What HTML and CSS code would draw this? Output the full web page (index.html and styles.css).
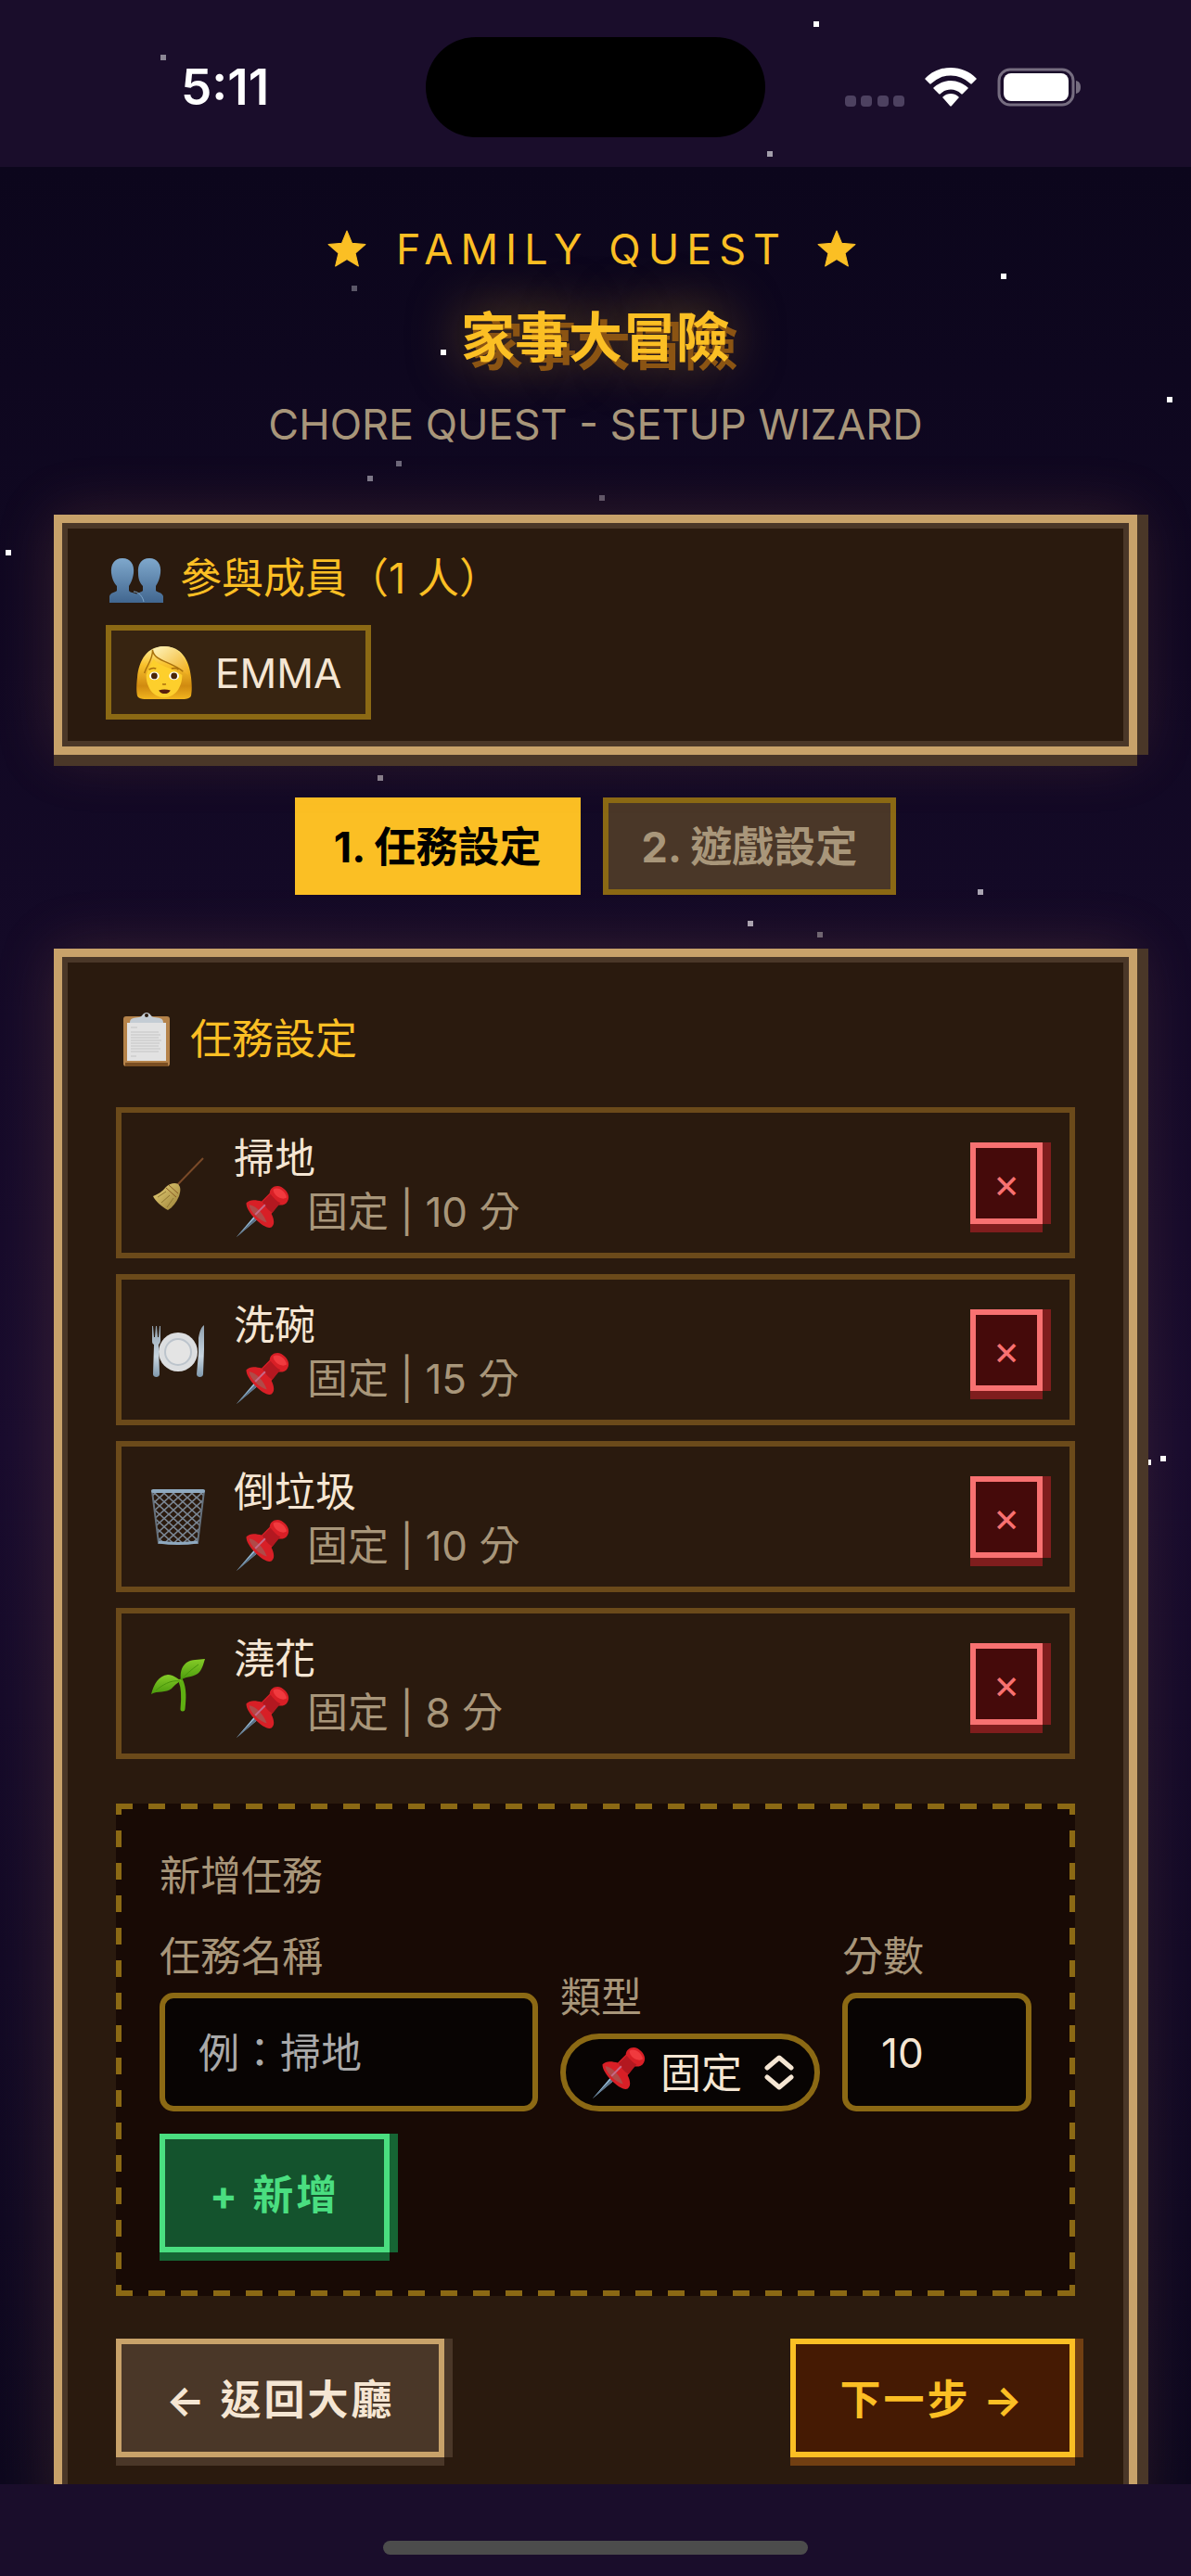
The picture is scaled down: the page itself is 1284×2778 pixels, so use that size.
FILE: index.html
```html
<!DOCTYPE html>
<html lang="zh-Hant">
<head>
    <meta charset="UTF-8">
    <meta name="viewport" content="width=device-width, initial-scale=1.0">
    <title>家事大冒險</title>
    <link rel="stylesheet" href="styles.css">
</head>
<body>
    <!-- 共用圖示 -->
    <svg class="defs" aria-hidden="true">
        <defs>
            <linearGradient id="people" x1="0" y1="0" x2="0" y2="1">
                <stop offset="0" stop-color="#7fa8cc"/>
                <stop offset="1" stop-color="#41668f"/>
            </linearGradient>
            <linearGradient id="hair" x1="0" y1="0" x2="0" y2="1">
                <stop offset="0" stop-color="#fff0a0"/>
                <stop offset="0.35" stop-color="#f9c22c"/>
                <stop offset="0.75" stop-color="#d08a10"/>
                <stop offset="1" stop-color="#f2b51e"/>
            </linearGradient>
            <linearGradient id="fringe" x1="0" y1="0" x2="1" y2="1">
                <stop offset="0" stop-color="#fff6c0"/>
                <stop offset="1" stop-color="#f0ac18"/>
            </linearGradient>
            <linearGradient id="straw" x1="0" y1="0" x2="1" y2="1">
                <stop offset="0" stop-color="#e8d27a"/>
                <stop offset="1" stop-color="#9a7f35"/>
            </linearGradient>
            <linearGradient id="leaf" x1="0" y1="0" x2="0" y2="1">
                <stop offset="0" stop-color="#86cc28"/>
                <stop offset="1" stop-color="#4a9a0c"/>
            </linearGradient>
            <linearGradient id="metal" x1="0" y1="0" x2="0" y2="1">
                <stop offset="0" stop-color="#8fa0ae"/>
                <stop offset="0.6" stop-color="#c9d6e0"/>
                <stop offset="1" stop-color="#7f98ac"/>
            </linearGradient>
            <pattern id="mesh" width="10" height="9" patternUnits="userSpaceOnUse">
                <path d="M0 0L10 9M10 0L0 9" stroke="#7b8794" stroke-width="1.6"/>
            </pattern>
        </defs>
        <symbol id="pin" viewBox="0 0 60 60">
            <path d="M2 58L24 32l4 4z" fill="#9cc3e0"/>
            <path d="M2 58L25 34l3 2z" fill="#5b7288"/>
            <path d="M13 20c4-5 12-3 17-2l9-9c0-6 7-10 13-7 7 4 10 11 7 16-2 4-7 5-11 4l-7 10c3 6 4 12 0 15-7 4-29-17-28-27z" fill="#d81f26"/>
            <path d="M16 22c4 0 14 5 20 20-8-2-19-12-20-20z" fill="#b04a48"/>
            <path d="M40 10c3 4 7 8 11 10l-9 11c-5-3-8-7-11-12z" fill="#b31820"/>
            <path d="M43 5c5-4 14 2 15 9-6 4-15-3-15-9z" fill="#f03a3e"/>
            <path d="M23 33l11-11" stroke="#c66a8a" stroke-width="2"/>
        </symbol>
        <symbol id="star" viewBox="0 0 40 40">
            <path d="M20 1l5.3 12.7 13.7 1.1-10.4 9 3.2 13.4L20 30 8.2 37.2l3.2-13.4-10.4-9 13.7-1.1z" fill="currentColor" stroke="currentColor" stroke-linejoin="round"/>
        </symbol>
    </svg>

    <div class="stars"></div>

    <!-- 狀態列 -->
    <div class="status-bar">
        <span class="time">5:11</span>
        <div class="island"></div>
        <div class="status-icons">
            <svg class="dots" viewBox="0 0 64 12"><g fill="#4d4160"><rect width="12" height="12" rx="4"/><rect x="17" width="12" height="12" rx="4"/><rect x="35" width="12" height="12" rx="4"/><rect x="52" width="12" height="12" rx="4"/></g></svg>
            <svg class="wifi" viewBox="0 0 56 42"><g fill="#fff"><path d="M28 0c11 0 20 4 27 11 1 1 1 1 0 2l-4 4c-1 1-1 1-2 0A30 30 0 0 0 7 17c-1 1-1 1-2 0l-4-4c-1-1-1-1 0-2C8 4 17 0 28 0z"/><path d="M28 14c7 0 13 3 18 7 1 1 1 1 0 2l-5 5c-1 1-1 1-2 0-6-6-16-6-22 0-1 1-1 1-2 0l-5-5c-1-1-1-1 0-2 5-4 11-7 18-7z"/><path d="M28 28c3 0 6 1 8 3 1 1 1 1 0 2l-7 8c-1 1-1 1-2 0l-7-8c-1-1-1-1 0-2 2-2 5-3 8-3z"/></g></svg>
            <svg class="battery" viewBox="0 0 90 42"><rect x="2" y="2" width="80" height="38" rx="12" fill="none" stroke="#766d80" stroke-width="3"/><rect x="7" y="6" width="70" height="30" rx="8" fill="#fff"/><path d="M85 14c4 1 5 4 5 7s-1 6-5 7z" fill="#766d80"/></svg>
        </div>
    </div>

    <main class="container">
        <header class="header">
            <p class="brand">
                <svg class="star"><use href="#star"/></svg>
                <span>FAMILY QUEST</span>
                <svg class="star"><use href="#star"/></svg>
            </p>
            <h1>家事大冒險</h1>
            <p class="subtitle">CHORE QUEST - SETUP WIZARD</p>
        </header>

        <!-- 參與成員 -->
        <section class="panel members">
            <h2 class="panel-title">
                <svg class="icon" viewBox="0 0 60 60"><g fill="url(#people)"><path d="M44 8c9 0 13 7 12 16-1 7-3 11-5 14v5c2 2 7 2 8 6v7H29v-7c1-4 6-4 8-6v-5c-3-3-5-7-5-14-1-9 3-16 12-16z"/><path d="M15 8c9 0 13 7 12 16-1 7-3 11-5 14v5c2 3 8 2 11 5 3 2 4 4 5 8H1v-7c1-4 6-4 8-6v-5c-3-3-5-7-6-14C2 15 6 8 15 8z"/></g><path d="M27 44c6 0 10 6 11 11" stroke="#7fa8cc" stroke-width="1" fill="none"/></svg>
                <span>參與成員（1 人）</span>
            </h2>
            <div class="member">
                <svg class="avatar" viewBox="0 0 62 62"><path d="M31 1C12 1 3 16 1 36c-1 10-1 14 0 20 1 4 9 4 15 4h30c6 0 14 0 15-4 1-6 1-10 0-20C59 16 50 1 31 1z" fill="url(#hair)"/><path d="M11 33c2-7 6-12 8-18 7 9 20 9 32 18 0 14-8 25-20 25S11 47 11 33z" fill="#fdcf2c"/><path d="M18 5c2 13 19 12 40 28C56 14 46 1 31 1c-6 0-10 2-13 4z" fill="url(#fringe)"/><path d="M18 5c2 13 19 12 34 24M18 5c1 10-7 18-9 26" stroke="#a9710c" stroke-width="1.5" fill="none"/><g fill="#fff"><ellipse cx="20" cy="34" rx="5.500" ry="4.500"/><ellipse cx="42" cy="34" rx="5.500" ry="4.500"/></g><g fill="#4a2606"><circle cx="20" cy="34" r="3.500"/><circle cx="42" cy="34" r="3.500"/></g><path d="M14 27c3-2 6-2 8-1M39 26c3-1 6-1 8 1M29 43q2 1 4 0" stroke="#a86d0d" stroke-width="1.500" fill="none"/><path d="M25 50q6-2 13 0c-2 5-11 5-13 0z" fill="#5a1f0c"/></svg>
                <span>EMMA</span>
            </div>
        </section>

        <!-- 步驟 -->
        <nav class="tabs">
            <button class="tab active">1. 任務設定</button>
            <button class="tab">2. 遊戲設定</button>
        </nav>

        <!-- 任務設定 -->
        <section class="panel setup">
            <h2 class="panel-title">
                <svg class="icon" viewBox="0 0 60 60"><rect x="5" y="5" width="50" height="54" rx="3" fill="#b5834a"/><rect x="7" y="55" width="46" height="4" fill="#7a4e22"/><rect x="9" y="12" width="42" height="41" fill="#e2e2e2"/><path d="M12 12c0-6 5-5 10-6 3 0 4-5 8-5s5 5 8 5c5 1 10 0 10 6z" fill="#c4ccd4"/><circle cx="30" cy="4" r="2" fill="#2a1a0e"/><path d="M13 17h7M13 22h30M13 25h32M13 28h30M13 31h33M13 34h31M13 37h30M13 40h32M13 43h30M13 48h6" stroke="#c4c4c4" stroke-width="1"/></svg>
                <span>任務設定</span>
            </h2>

            <ul class="quest-list">
                <li class="quest">
                    <svg class="quest-icon" viewBox="0 0 60 60"><path d="M57 3L29 32" stroke="#7a4a28" stroke-width="2"/><path d="M17 34c4-4 10-5 13-3 3 3 3 7 1 13-3 7-7 12-12 15C12 55 6 50 3 44c5-2 10-5 14-10z" fill="url(#straw)"/><path d="M20 32l10 9M17 35l11 10" stroke="#8a5a24" stroke-width="1"/><path d="M8 45l9-6M12 51l9-8M18 56l7-10" stroke="#8f7732" stroke-width="1"/></svg>
                    <div class="quest-info">
                        <p class="quest-name">掃地</p>
                        <p class="quest-meta"><svg class="pin"><use href="#pin"/></svg>固定 | 10 分</p>
                    </div>
                    <button class="delete-btn" aria-label="刪除 掃地">×</button>
                </li>
                <li class="quest">
                    <svg class="quest-icon" viewBox="0 0 60 60"><circle cx="30" cy="32" r="21" fill="#dcdee0"/><circle cx="30" cy="32" r="14" fill="#e4e4e4" stroke="#bcc4cc" stroke-width="2"/><g fill="url(#metal)"><path d="M2 4h1l1 12h1L6 4h1l1 12h1l1-12h1v15c0 3-1 4-2 5l1 32c0 4-7 4-7 0l1-32c-2-1-2-2-2-5z"/><path d="M58 3v26l-1 27c0 4-7 4-7 0l2-23V17c1-7 3-12 6-14z"/></g></svg>
                    <div class="quest-info">
                        <p class="quest-name">洗碗</p>
                        <p class="quest-meta"><svg class="pin"><use href="#pin"/></svg>固定 | 15 分</p>
                    </div>
                    <button class="delete-btn" aria-label="刪除 洗碗">×</button>
                </li>
                <li class="quest">
                    <svg class="quest-icon" viewBox="0 0 60 60"><path d="M2 2h56l-7 56H9z" fill="url(#mesh)" stroke="#66717c" stroke-width="2"/><rect x="1" y="0" width="58" height="4" rx="2" fill="#8fa9bf"/><path d="M9 57q21 3 42 0" stroke="#8fa9bf" stroke-width="3" fill="none"/></svg>
                    <div class="quest-info">
                        <p class="quest-name">倒垃圾</p>
                        <p class="quest-meta"><svg class="pin"><use href="#pin"/></svg>固定 | 10 分</p>
                    </div>
                    <button class="delete-btn" aria-label="刪除 倒垃圾">×</button>
                </li>
                <li class="quest">
                    <svg class="quest-icon" viewBox="0 0 60 60"><path d="M33 27c4 9 3 20 2 30" stroke="#5fb012" stroke-width="5" fill="none" stroke-linecap="round"/><g fill="url(#leaf)"><path d="M1 41c3-11 8-20 18-21 6 0 10 4 15 7-5 1-7 4-11 8-6 5-15 2-22 6z"/><path d="M33 26c-1-7 0-14 6-19 6-4 13-3 20-4-2 6-3 12-8 16-6 4-14 3-18 7z"/></g><path d="M33 26C38 20 45 14 52 9M32 27C22 25 12 32 6 37" stroke="#4a960c" stroke-width="1" fill="none"/></svg>
                    <div class="quest-info">
                        <p class="quest-name">澆花</p>
                        <p class="quest-meta"><svg class="pin"><use href="#pin"/></svg>固定 | 8 分</p>
                    </div>
                    <button class="delete-btn" aria-label="刪除 澆花">×</button>
                </li>
            </ul>

            <!-- 新增任務 -->
            <form class="add-form" onsubmit="return false">
                <p class="form-title">新增任務</p>
                <div class="fields">
                    <div class="field field-name">
                        <label for="quest-name">任務名稱</label>
                        <input type="text" id="quest-name" placeholder="例：掃地">
                    </div>
                    <div class="field field-type">
                        <label for="quest-type">類型</label>
                        <div class="select-wrap">
                            <select id="quest-type">
                                <option>固定</option>
                            </select>
                            <svg class="pin select-pin"><use href="#pin"/></svg>
                            <svg class="chevrons" viewBox="0 0 32 38"><path d="M3 14L16 3l13 11M3 24l13 11 13-11" fill="none" stroke="#f5e6d3" stroke-width="5" stroke-linecap="round" stroke-linejoin="round"/></svg>
                        </div>
                    </div>
                    <div class="field field-points">
                        <label for="quest-points">分數</label>
                        <input type="number" id="quest-points" value="10">
                    </div>
                    <button class="btn btn-add">+ 新增</button>
                </div>
            </form>

            <div class="actions">
                <button class="btn btn-back">← 返回大廳</button>
                <button class="btn btn-next">下一步 →</button>
            </div>
        </section>
    </main>

    <div class="home-bar"><div class="home-indicator"></div></div>
</body>
</html>
```
FILE: styles.css
```css
* {
    margin: 0;
    padding: 0;
    box-sizing: border-box;
    font-family: Inter, 'Noto Sans CJK TC', sans-serif;
}

body {
    display: flex;
    flex-direction: column;
    height: 100vh;
    background: #1a0d2b;
    color: #f5e6d3;
    font-size: 44px;
    line-height: 62px;
    overflow: hidden;
}

button,
input,
select {
    font-size: 44px;
    line-height: 62px;
}

.defs {
    position: absolute;
    width: 0;
    height: 0;
}

/* 星空 */
.stars {
    position: absolute;
    top: 0;
    left: 0;
    width: 6px;
    height: 6px;
    z-index: 1;
    box-shadow:
        173px 59px #8c8695, 877px 23px #fff, 827px 163px #a39eab,
        1079px 295px #fff, 379px 308px #5b5768, 475px 377px #fff,
        1258px 428px #fff, 427px 497px #6d687a, 396px 513px #7c788a,
        646px 534px #5d566a, 6px 593px #fff, 407px 836px #857f8d,
        1054px 959px #aaa5b3, 806px 993px #aaa5b3, 881px 1005px #6b6574,
        1251px 1570px #fff, 1235px 1574px #fff;
}

/* 狀態列 */
.status-bar {
    position: relative;
    display: flex;
    flex-shrink: 0;
    align-items: center;
    justify-content: space-between;
    height: 180px;
    padding: 8px 119px 0 195px;
}

.time {
    color: #fff;
    font-size: 53px;
    font-weight: 600;
}

.island {
    position: absolute;
    top: 40px;
    left: 50%;
    width: 366px;
    height: 108px;
    margin-left: -183px;
    border-radius: 54px;
    background: #000;
}

.status-icons {
    display: flex;
    align-items: flex-end;
    gap: 22px;
}

.dots { width: 64px; height: 12px; }
.wifi { width: 56px; height: 42px; }
.battery { width: 90px; height: 42px; }

/* 內容 */
.container {
    flex: 1;
    min-height: 0;
    padding: 58px 58px 0;
    background: linear-gradient(#0c061c, #190c2e 55%, #0d081e);
    overflow: hidden;
}

.header {
    text-align: center;
    margin-bottom: 66px;
}

.brand {
    display: flex;
    align-items: center;
    justify-content: center;
    gap: 32px;
    padding-right: 8px;
    color: #fbbf24;
    font-size: 45px;
    letter-spacing: 8px;
}

.star {
    width: 42px;
    height: 42px;
}

h1 {
    margin: 22px 0 21px;
    color: #fbbf24;
    font-size: 58px;
    line-height: 84px;
    font-weight: 700;
    text-shadow: 9px 9px 0 #8b5413, 0 0 60px rgba(251, 191, 36, 0.5);
}

.subtitle {
    color: #a8967a;
    font-size: 45px;
}

/* 面板 */
.panel {
    position: relative;
    z-index: 2;
    background: #2a1a0e;
    border: 9px solid #c8a26a;
    box-shadow:
        inset 0 0 0 6px #4a3728,
        12px 0 0 #4a3728,
        0 12px 0 #4a3728,
        0 0 60px rgba(200, 120, 80, 0.2);
}

.panel-title {
    display: flex;
    align-items: center;
    gap: 17px;
    padding-left: 3px;
    color: #fbbf24;
    font-size: 45px;
    font-weight: 400;
}

.icon {
    width: 60px;
    height: 60px;
}

.members {
    padding: 29px 47px;
}

.member {
    display: inline-flex;
    align-items: center;
    gap: 24px;
    height: 102px;
    margin-top: 19px;
    padding: 2px 26px 0;
    background: #372411;
    border: 6px solid #8b6914;
    vertical-align: top;
}

.avatar {
    width: 62px;
    height: 60px;
}

/* 步驟按鈕 */
.tabs {
    display: flex;
    justify-content: center;
    gap: 24px;
    margin: 46px 0 58px;
}

.tab {
    height: 105px;
    padding: 3px 36px 0;
    background: #4a3728;
    border: 6px solid #8b6914;
    color: #a8967a;
    font-size: 45px;
    font-weight: 700;
}

.tab.active {
    background: #fbbf24;
    border-color: #fbbf24;
    color: #000;
}

.setup {
    padding: 58px;
}

/* 任務清單 */
.quest-list {
    display: grid;
    gap: 17px;
    margin: 42px 0 48px;
    list-style: none;
}

.quest {
    display: flex;
    align-items: center;
    gap: 28px;
    height: 163px;
    padding: 0 29px;
    border: 6px solid #6b4a1a;
}

.quest-icon {
    width: 64px;
    height: 60px;
}

.quest-info {
    flex: 1;
    padding-top: 5px;
    line-height: 58px;
}

.quest-meta {
    display: flex;
    align-items: center;
    gap: 19px;
    color: #a8967a;
}

.pin {
    width: 60px;
    height: 58px;
}

.delete-btn {
    width: 78px;
    height: 88px;
    background: #450a0a;
    border: 6px solid #f87171;
    box-shadow: 9px 0 0 #7f1d1d, 0 9px 0 #7f1d1d;
    color: #f87171;
}

/* 新增任務：虛線框 */
.add-form {
    padding: 41px;
    border: 6px solid transparent;
    background:
        repeating-linear-gradient(90deg, #8b6914 0 18px, transparent 18px 35px) 0 0 / 100% 6px no-repeat,
        repeating-linear-gradient(90deg, #8b6914 0 18px, transparent 18px 35px) 0 100% / 100% 6px no-repeat,
        linear-gradient(#8b6914 18px, transparent 18px) 0 -6px / 6px 35px repeat-y,
        linear-gradient(#8b6914 18px, transparent 18px) 100% -6px / 6px 35px repeat-y,
        #180a05;
    background-origin: border-box;
}

.form-title,
.field label {
    color: #a8967a;
}

.fields {
    display: flex;
    flex-wrap: wrap;
    align-items: flex-end;
    gap: 24px;
    margin-top: 25px;
}

.field {
    display: flex;
    flex-direction: column;
    gap: 8px;
}

.field-name { flex: 1 1 400px; }
.field-type { width: 280px; }
.field-points { width: 204px; }

input {
    width: 100%;
    height: 128px;
    padding: 2px 36px 0;
    background: #080403;
    border: 6px solid #8b6914;
    border-radius: 15px;
    color: #f5e6d3;
    appearance: textfield;
}

input::placeholder {
    color: #a9a9a9;
}

.select-wrap {
    position: relative;
    display: flex;
}

select {
    width: 100%;
    height: 84px;
    padding: 2px 0 0 102px;
    appearance: none;
    background: #080403;
    border: 6px solid #8b6914;
    border-radius: 42px;
    color: #f5e6d3;
}

.select-pin {
    position: absolute;
    top: 14px;
    left: 32px;
    pointer-events: none;
}

.chevrons {
    position: absolute;
    top: 23px;
    right: 28px;
    width: 32px;
    height: 38px;
    pointer-events: none;
}

/* 按鈕 */
.btn {
    height: 128px;
    padding: 3px 48px 0;
    border: 6px solid;
    font-weight: 700;
    letter-spacing: 3px;
}

.btn-add {
    background: #14532d;
    border-color: #4ade80;
    box-shadow: 9px 0 0 #166534, 0 9px 0 #166534;
    color: #4ade80;
}

.actions {
    display: flex;
    justify-content: space-between;
    margin-top: 46px;
}

.btn-back {
    background: #4a3728;
    border-color: #c8a26a;
    box-shadow: 9px 0 0 #4a3728, 0 9px 0 #4a3728;
    color: #f5e6d3;
}

.btn-next {
    background: #451a03;
    border-color: #fbbf24;
    box-shadow: 9px 0 0 #713f12, 0 9px 0 #713f12;
    color: #fbbf24;
}

/* 底部 */
.home-bar {
    display: flex;
    flex-shrink: 0;
    align-items: flex-end;
    justify-content: center;
    height: 99px;
    padding-bottom: 23px;
}

.home-indicator {
    width: 458px;
    height: 15px;
    border-radius: 8px;
    background: #4c4c4c;
}
```
